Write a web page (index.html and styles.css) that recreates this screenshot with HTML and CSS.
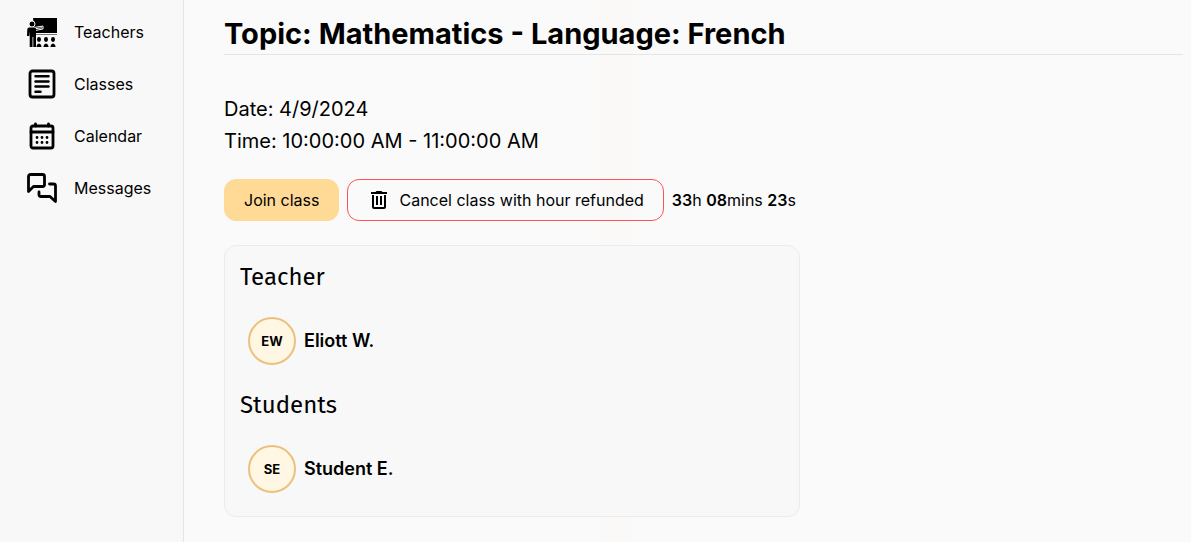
FILE: index.html
```html
<!DOCTYPE html>
<html lang="en">
<head>
<meta charset="utf-8">
<meta name="viewport" content="width=device-width, initial-scale=1">
<title>Class details</title>
<link rel="stylesheet" href="styles.css">
</head>
<body>
<div class="layout">
  <nav class="sidebar" aria-label="Main">
    <a class="nav-link" href="#teachers">
      <svg class="nav-icon" viewBox="0 0 32 32" aria-hidden="true">
        <path d="M7 2h24v15H9z"/>
        <path d="M9 18.500h22" stroke="#777" stroke-width="1"/>
        <path d="M8 11.500l9-1.500v3l-8 1.500z" stroke="#f8f8f8" stroke-width="1"/>
        <path d="M9 12.200l7-1v1l-7 1z" fill="#f8f8f8"/>
        <circle cx="6" cy="8" r="3" stroke="#f8f8f8" stroke-width="1"/>
        <path d="M3 11.500h5.500l1.500 1V31H7.300V21h-.8v10H3.700V15.500L3.200 20H1l.3-6.500q.2-2 1.700-2z"/>
        <ellipse cx="13" cy="23.500" rx="2" ry="2.400"/><ellipse cx="20" cy="23.500" rx="2" ry="2.400"/><ellipse cx="27" cy="23.500" rx="2" ry="2.400"/>
        <path d="M10.500 31q0-3 2.500-3.500 2.500.5 2.500 3.500zM17.500 31q0-3 2.500-3.500 2.500.5 2.500 3.500zM24.500 31q0-3 2.500-3.500 2.500.5 2.500 3.500z"/>
      </svg>
      Teachers
    </a>
    <a class="nav-link" href="#classes">
      <svg class="nav-icon line" viewBox="0 0 32 32" aria-hidden="true">
        <rect x="4" y="3" width="24" height="26" rx="2.500"/>
        <path d="M9.500 8.200h13M9.500 13.400h13M9.500 18.600h13M9.500 23.800h5" stroke-width="2.500"/>
      </svg>
      Classes
    </a>
    <a class="nav-link" href="#calendar">
      <svg class="nav-icon line" viewBox="0 0 32 32" aria-hidden="true">
        <rect x="5" y="6" width="22" height="22" rx="2"/>
        <path d="M5 12h22M9.500 4V6M22.500 4V6"/>
        <path d="M11 17.500h.01M16 17.500h.01M21 17.500h.01M11 22.500h.01M16 22.500h.01M21 22.500h.01"/>
      </svg>
      Calendar
    </a>
    <a class="nav-link" href="#messages">
      <svg class="nav-icon line" viewBox="0 0 32 32" aria-hidden="true">
        <path d="M2.500 19.500V4.500a2 2 0 0 1 2-2h12a2 2 0 0 1 2 2v8a2 2 0 0 1-2 2H7.500z"/>
        <path d="M23.500 12h4a2 2 0 0 1 2 2v15.500l-5.500-5H15a2 2 0 0 1-2-2v-2.500"/>
      </svg>
      Messages
    </a>
  </nav>
  <main class="content">
    <h1 class="title">Topic: Mathematics - Language: French</h1>
    <div class="schedule">
      <p>Date: 4/9/2024</p>
      <p>Time: 10:00:00 AM - 11:00:00 AM</p>
    </div>
    <div class="actions">
      <button class="button join" type="button">Join class</button>
      <button class="button cancel" type="button">
        <svg class="trash" viewBox="0 0 24 24" aria-hidden="true">
          <path d="M15.500 4l-1-1h-5l-1 1H4v2h16V4zM5 7v12q0 2 2 2h10q2 0 2-2V7h-2v12H7V7zM9 8v9h2V8zM13 8v9h2V8z"/>
        </svg>
        Cancel class with hour refunded
      </button>
      <p class="countdown"><b>33</b>h <b>08</b>mins <b>23</b>s</p>
    </div>
    <section class="people">
      <h2 class="group-title">Teacher</h2>
      <div class="person"><span class="avatar">EW</span><span class="name">Eliott W.</span></div>
      <h2 class="group-title">Students</h2>
      <div class="person"><span class="avatar">SE</span><span class="name">Student E.</span></div>
    </section>
  </main>
</div>
</body>
</html>
```
FILE: styles.css
```css
* { box-sizing: border-box; }
body {
  margin: 0;
  font: 16px/24px Inter, "Liberation Sans", sans-serif;
  color: #000;
  background: #fafafa;
}
h1, h2, p { margin: 0; }
.layout { display: flex; min-height: 100vh; }
.sidebar {
  display: flex;
  flex-direction: column;
  gap: 12px;
  flex: none;
  width: 184px;
  padding: 12px 26px;
  background: #f8f8f8;
  border-right: 1px solid #e5e5e5;
}
.nav-link {
  display: flex;
  align-items: center;
  gap: 16px;
  height: 40px;
  color: #000;
  text-decoration: none;
}
.nav-icon { flex: none; width: 32px; height: 32px; }
.line {
  fill: none;
  stroke: #000;
  stroke-width: 2.8;
  stroke-linecap: round;
  stroke-linejoin: round;
}
.content {
  flex: 1;
  padding: 16px 8px 24px 40px;
  background: linear-gradient(#fbf9f7, #fbf9f7) 416px 0 / 32px 100% no-repeat;
}
.title {
  font-size: 29px;
  line-height: 36px;
  font-weight: 700;
  padding-bottom: 2px;
  border-bottom: 1px solid #e5e5e5;
}
.schedule { margin-top: 38px; font-size: 20px; line-height: 32px; }
.actions { display: flex; flex-wrap: wrap; align-items: center; gap: 8px; margin-top: 22px; }
.button {
  display: flex;
  align-items: center;
  gap: 8px;
  height: 42px;
  padding: 0 19px;
  border: 1px solid #ffd996;
  border-radius: 12px;
  font: inherit;
  color: #000;
  cursor: pointer;
}
.join { background: #ffd996; }
.cancel { background: transparent; border-color: #ff5252; }
.trash { width: 24px; height: 24px; }
.countdown b { font-weight: 600; }
.people {
  max-width: 576px;
  margin-top: 24px;
  padding: 15px;
  border: 1px solid #ebebeb;
  border-radius: 12px;
  background: #f8f8f8;
}
.group-title {
  font: 400 24px/32px "Fira Sans", "Noto Sans", sans-serif;
}
.person {
  display: flex;
  align-items: center;
  gap: 8px;
  padding: 24px 8px;
}
.person:last-child { padding-bottom: 8px; }
.avatar {
  display: flex;
  align-items: center;
  justify-content: center;
  width: 48px;
  height: 48px;
  border: 2px solid #e9c27f;
  border-radius: 50%;
  background: #fff6e3;
  font-size: 13px;
  font-weight: 700;
}
.name { font-size: 18px; font-weight: 600; }
```
